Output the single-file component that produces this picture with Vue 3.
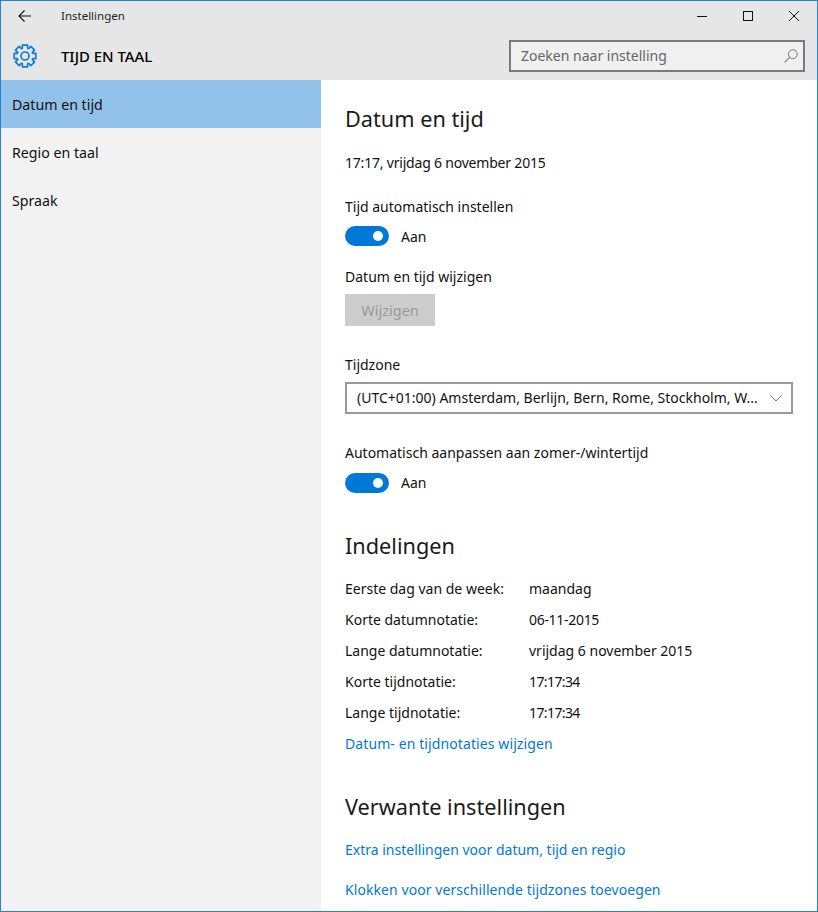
<script setup>
const items = [
  { label: 'Datum en tijd', active: true },
  { label: 'Regio en taal', active: false },
  { label: 'Spraak', active: false },
]
const formats = [
  ['Eerste dag van de week:', 'maandag', ''],
  ['Korte datumnotatie:', '06-11-2015', 'num'],
  ['Lange datumnotatie:', 'vrijdag 6 november 2015', ''],
  ['Korte tijdnotatie:', '17:17:34', 'time'],
  ['Lange tijdnotatie:', '17:17:34', 'time'],
]
const gear = (() => {
  const c = 12, pts = []
  for (let i = 0; i < 8; i++) {
    const a = (i * Math.PI) / 4 - Math.PI / 2
    const p = (r, d) => {
      const t = a + d
      return (c + r * Math.cos(t)).toFixed(2) + ' ' + (c + r * Math.sin(t)).toFixed(2)
    }
    pts.push(p(8.1, -0.33), p(11.2, -0.24), p(11.2, 0.24), p(8.1, 0.33))
  }
  return 'M' + pts.join('L') + 'Z'
})()
</script>

<template>
  <div class="window">
    <div class="chrome">
      <div class="titlebar">
        <div class="title-left">
          <svg class="back" width="16" height="14" viewBox="0 0 16 14"><path d="M14 7H2M7.5 1.5 2 7l5.5 5.5" fill="none" stroke="#111" stroke-width="1.1" /></svg>
          <span class="app-name">Instellingen</span>
        </div>
        <div class="controls">
          <svg width="12" height="12" viewBox="0 0 12 12"><path d="M1 6.5h10" stroke="#111" stroke-width="1" /></svg>
          <svg width="12" height="12" viewBox="0 0 12 12"><rect x="1.5" y="1.5" width="9" height="9" fill="none" stroke="#111" stroke-width="1" /></svg>
          <svg width="12" height="12" viewBox="0 0 12 12"><path d="M1 1l10 10M11 1 1 11" stroke="#111" stroke-width="1" /></svg>
        </div>
      </div>
      <div class="header">
        <div class="header-left">
          <svg class="gear" width="24" height="24" viewBox="0 0 24 24">
            <path :d="gear" fill="none" stroke="#0a7bd6" stroke-width="1.6" stroke-linejoin="round" />
            <circle cx="12" cy="12" r="4" fill="none" stroke="#0a7bd6" stroke-width="1.6" />
          </svg>
          <span class="section">TIJD EN TAAL</span>
        </div>
        <div class="search">
          <span>Zoeken naar instelling</span>
          <svg width="16" height="16" viewBox="0 0 16 16"><circle cx="9.8" cy="6.2" r="4.4" fill="none" stroke="#777" stroke-width="1" /><path d="M6.6 9.4 1.6 14.4" stroke="#777" stroke-width="1.1" /></svg>
        </div>
      </div>
    </div>
    <div class="body">
      <nav class="sidebar">
        <div v-for="it in items" :key="it.label" class="nav-item" :class="{ active: it.active }">{{ it.label }}</div>
      </nav>
      <main class="content">
        <h2 class="h-first">Datum en tijd</h2>
        <p class="now">17:17, vrijdag 6 november 2015</p>
        <p class="label l-auto">Tijd automatisch instellen</p>
        <div class="toggle-row t-first"><span class="toggle"><i></i></span><span class="state">Aan</span></div>
        <p class="label l-change">Datum en tijd wijzigen</p>
        <button class="btn" disabled>Wijzigen</button>
        <p class="label l-zone">Tijdzone</p>
        <div class="select">
          <span>(UTC+01:00) Amsterdam, Berlijn, Bern, Rome, Stockholm, W...</span>
          <svg width="12" height="7" viewBox="0 0 12 7"><path d="M.5.5 6 6l5.5-5.5" fill="none" stroke="#777" stroke-width="1" /></svg>
        </div>
        <p class="label l-zone">Automatisch aanpassen aan zomer-/wintertijd</p>
        <div class="toggle-row t-second"><span class="toggle"><i></i></span><span>Aan</span></div>
        <h2 class="h-next">Indelingen</h2>
        <div class="formats">
          <template v-for="f in formats" :key="f[0]">
            <span>{{ f[0] }}</span><span :class="f[2]">{{ f[1] }}</span>
          </template>
        </div>
        <a class="link l-fmt">Datum- en tijdnotaties wijzigen</a>
        <h2 class="h-next">Verwante instellingen</h2>
        <a class="link l-extra">Extra instellingen voor datum, tijd en regio</a>
        <a class="link l-clock">Klokken voor verschillende tijdzones toevoegen</a>
      </main>
    </div>
  </div>
</template>

<style>
html, body { margin: 0; padding: 0; }
</style>

<style scoped>
.window {
  box-sizing: border-box;
  width: 818px;
  height: 912px;
  border: 1px solid #2b80cf;
  overflow: hidden;
  display: flex;
  flex-direction: column;
  background: #fff;
  font-family: "Noto Sans", "Open Sans", sans-serif;
  font-size: 14px;
  line-height: 20px;
  color: #111;
}
.chrome { background: #e6e6e6; flex: none; }
.titlebar { box-sizing: border-box; height: 31px; padding-bottom: 2px; display: flex; justify-content: space-between; align-items: center; }
.title-left { display: flex; align-items: center; }
.back { margin-left: 16px; }
.app-name { margin-left: 28px; font-size: 11.5px; color: #222; }
.controls { display: flex; gap: 34px; margin-right: 17px; }
.header { height: 48px; display: flex; justify-content: space-between; align-items: center; }
.header-left { display: flex; align-items: center; }
.gear { margin-left: 12px; }
.section { margin-left: 24px; font-size: 14.9px; font-weight: 500; color: #000; }
.search {
  box-sizing: border-box;
  width: 296px;
  height: 32px;
  margin-right: 12px;
  border: 2px solid #7a7a7a;
  background: #f0f0f0;
  display: flex;
  align-items: center;
  justify-content: space-between;
  padding: 0 4px 1px 10px;
  color: #666;
  font-size: 14px;
}
.body { flex: 1; display: flex; min-height: 0; }
.sidebar { width: 320px; flex: none; background: #f2f2f2; }
.nav-item { height: 48px; line-height: 50px; padding-left: 11px; font-size: 14.2px; }
.nav-item.active { background: #92c1e9; }
.content { flex: 1; padding-left: 24px; }
h2 { margin: 0; font-size: 21.7px; font-weight: 400; line-height: 32px; color: #1a1a1a; }
p { margin: 0; }
.h-first { margin-top: 23px; }
.h-next { margin-top: 37px; }
.now { margin-top: 18px; letter-spacing: -0.2px; }
.num { letter-spacing: -0.3px; }
.time { letter-spacing: -0.6px; }
.l-auto { margin-top: 24px; }
.l-change { margin-top: 21px; }
.l-zone { margin-top: 29px; }
.toggle-row { display: flex; align-items: center; gap: 12px; height: 20px; }
.t-first { margin-top: 9px; }
.t-second { margin-top: 10px; }
.state { padding-top: 2px; }
.toggle {
  width: 44px;
  height: 20px;
  border-radius: 10px;
  background: #0078d7;
  position: relative;
  display: block;
}
.toggle i {
  position: absolute;
  right: 6px;
  top: 5px;
  width: 10px;
  height: 10px;
  border-radius: 50%;
  background: #fff;
}
.btn {
  display: block;
  width: 90px;
  height: 32px;
  margin-top: 7px;
  border: 0;
  padding: 0;
  background: #cccccc;
  color: #9a9a9a;
  font: inherit;
  font-size: 14.5px;
}
.select {
  box-sizing: border-box;
  width: 448px;
  height: 32px;
  margin-top: 7px;
  border: 2px solid #999;
  display: flex;
  align-items: center;
  justify-content: space-between;
  padding: 0 9px 0 10px;
  white-space: nowrap;
}
.formats {
  margin-top: 17px;
  display: grid;
  grid-template-columns: 184px 1fr;
  row-gap: 11px;
}
.link { display: block; color: #0078d7; }
.l-fmt { margin-top: 11px; letter-spacing: 0.1px; }
.l-extra { margin-top: 17px; }
.l-clock { margin-top: 20px; letter-spacing: 0.07px; }
</style>
